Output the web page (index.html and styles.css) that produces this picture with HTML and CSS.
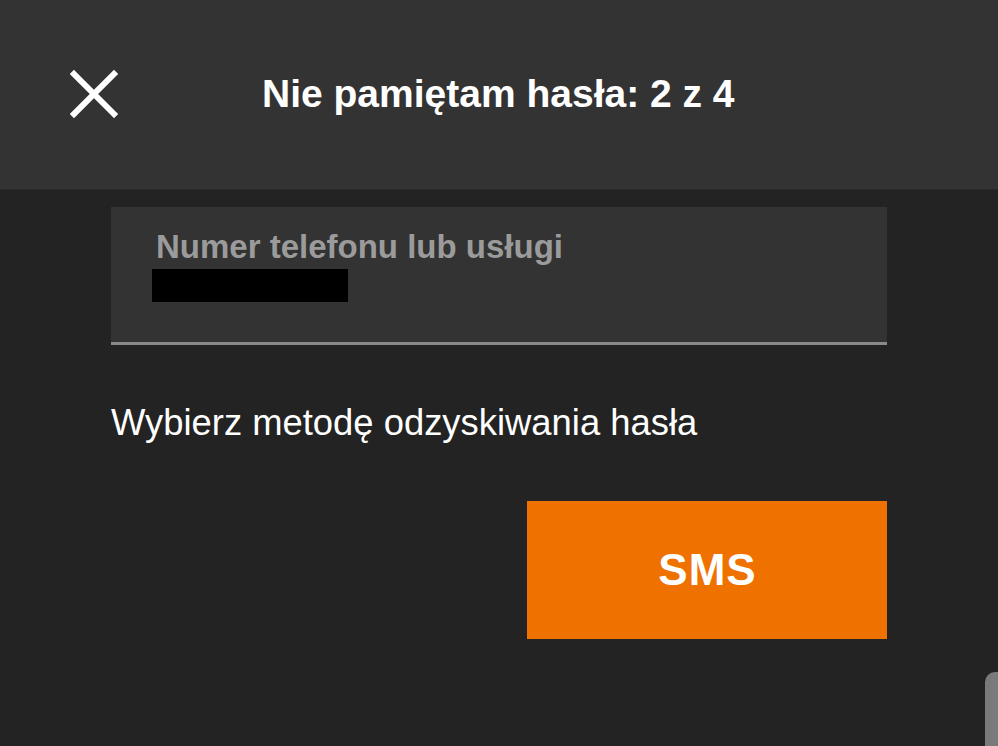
FILE: index.html
```html
<!DOCTYPE html>
<html lang="pl">
<head>
<meta charset="utf-8">
<link rel="stylesheet" href="styles.css">
</head>
<body>
<header class="topbar">
  <button class="close" aria-label="Zamknij">
    <svg width="48" height="48" viewBox="0 0 48 48"><path d="M4 4 L44 44 M44 4 L4 44" stroke="#fff" stroke-width="6" stroke-linecap="square" fill="none"/></svg>
  </button>
  <h1 class="title">Nie pamiętam hasła: 2 z 4</h1>
</header>
<main class="content">
  <div class="field">
    <div class="label">Numer telefonu lub usługi</div>
    <div class="redacted"></div>
  </div>
  <p class="prompt">Wybierz metodę odzyskiwania hasła</p>
  <div class="actions">
    <button class="sms">SMS</button>
  </div>
</main>
<div class="scrollbar"></div>
</body>
</html>
```
FILE: styles.css
```css
html, body {
  margin: 0;
  padding: 0;
  background: #232323;
  width: 998px;
  height: 746px;
  overflow: hidden;
  font-family: "Liberation Sans", Arial, sans-serif;
}
.topbar {
  height: 190px;
  background: #333333;
  display: flex;
  align-items: center;
  border-bottom: 1px solid #2b2b2b;
  box-sizing: border-box;
}
.close {
  background: none;
  border: 0;
  padding: 0;
  margin-left: 70px;
  width: 48px;
  height: 48px;
  display: flex;
  margin-top: -2px;
}
.title {
  margin: -2px 0 0 144px;
  color: #fff;
  font-size: 39px;
  font-weight: bold;
}
.content {
  padding: 17px 111px 0 111px;
}
.field {
  background: #333333;
  height: 111px;
  border-bottom: 3px solid #8a8a8a;
  padding: 24px 0 0 41px;
}
.label {
  color: #9b9b9b;
  font-size: 33px;
  font-weight: bold;
  line-height: 32px;
  margin-left: 4px;
}
.redacted {
  width: 196px;
  height: 33px;
  background: #000;
  margin-top: 6px;
}
.prompt {
  margin: 58px 0 0 0;
  color: #fff;
  font-size: 36.4px;
  line-height: 40px;
}
.actions {
  display: flex;
  justify-content: flex-end;
  margin-top: 58px;
}
.sms {
  width: 360px;
  height: 138px;
  background: #ef7100;
  color: #fff;
  border: 0;
  font-family: "Liberation Sans", Arial, sans-serif;
  font-size: 44px;
  font-weight: bold;
  letter-spacing: 1px;
  padding: 0 0 0 1px;
}
.scrollbar {
  position: absolute;
  left: 985px;
  top: 672px;
  width: 20px;
  height: 90px;
  background: #7a7a7a;
  border-radius: 10px 0 0 0;
}
```
